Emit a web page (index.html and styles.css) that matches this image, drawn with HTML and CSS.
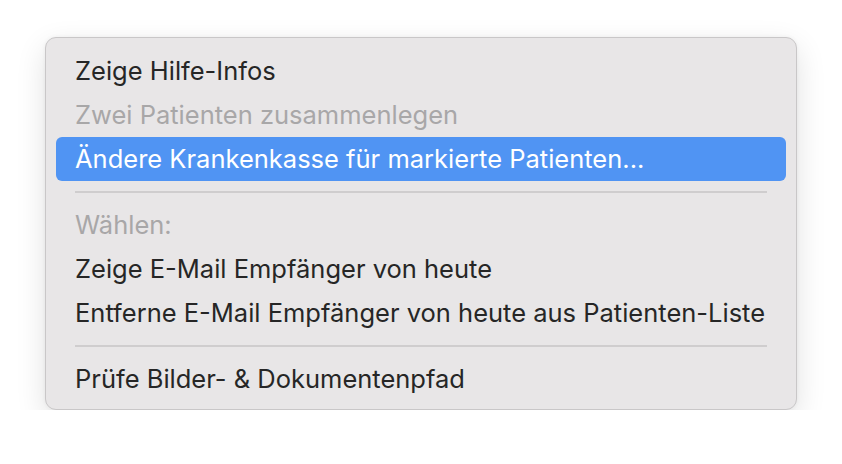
FILE: index.html
```html
<!DOCTYPE html>
<html lang="de">
<head>
    <meta charset="UTF-8">
    <title>Kontextmenü</title>
    <link rel="stylesheet" href="styles.css">
</head>
<body>

    <!-- Kontextmenü -->
    <ul class="menu">
        <li class="item">Zeige Hilfe-Infos</li>
        <li class="item disabled">Zwei Patienten zusammenlegen</li>
        <li class="item active">Ändere Krankenkasse für markierte Patienten...</li>
        <li class="separator"></li>
        <li class="item disabled">Wählen:</li>
        <li class="item">Zeige E-Mail Empfänger von heute</li>
        <li class="item">Entferne E-Mail Empfänger von heute aus Patienten-Liste</li>
        <li class="separator"></li>
        <li class="item">Prüfe Bilder- &amp; Dokumentenpfad</li>
    </ul>

</body>
</html>
```

FILE: styles.css
```css
body {
    margin: 0;
    background-color: #fff;
    font-family: Inter, "Liberation Sans", sans-serif;
}

.menu {
    list-style: none;
    margin: 37px 0 0 45px;
    padding: 11px 10px 8px 10px;
    width: 730px;
    background-color: #e8e6e7;
    border: 1px solid #c9c7c8;
    border-radius: 11px;
    box-shadow: 0 10px 30px rgba(0, 0, 0, 0.12), 0 0 4px rgba(0, 0, 0, 0.05);
}

.item {
    height: 44px;
    line-height: 44px;
    padding: 0 19px;
    font-size: 25.5px;
    color: #262626;
    border-radius: 6px;
    white-space: nowrap;
}

.item.disabled {
    color: #a8a7a8;
}

.item.active {
    background-color: #5094f3;
    color: #fff;
}

.separator {
    height: 2px;
    margin: 10px 19px;
    background-color: #cfcdce;
}
```
